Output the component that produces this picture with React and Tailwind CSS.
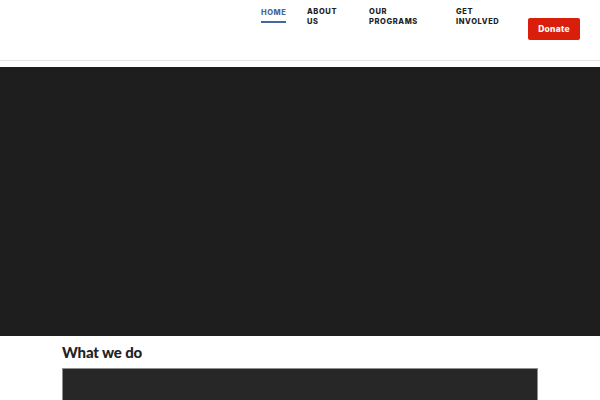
export default function App() {
  const font = { fontFamily: "Inter, 'Liberation Sans', sans-serif" };
  return (
    <div className="w-[600px] h-[400px] bg-white overflow-hidden" style={font}>
      <header className="h-[61px] border-b border-[#e4e4e4] flex items-start">
        <nav className="ml-[261px] flex items-start text-[7.5px] font-extrabold tracking-[0.08em] uppercase text-[#222] leading-[10px]">
          <a className="w-[46px] pt-[8px] text-[#46679a]">
            <span className="inline-block pb-[3px] border-b-2 border-[#46679a]">Home</span>
          </a>
          <a className="w-[62px] pt-[7px]">About<br />Us</a>
          <a className="w-[87px] pt-[7px]">Our<br />Programs</a>
          <a className="w-[72px] pt-[7px]">Get<br />Involved</a>
        </nav>
        <button className="mt-[18px] w-[52px] h-[22px] rounded-[2px] bg-[#d91e0b] text-white text-[8.5px] font-extrabold tracking-[0.03em]">
          Donate
        </button>
      </header>
      <div className="h-[6px]" />
      <section className="h-[269px] bg-[#1e1e1e]" />
      <section className="px-[62px] pt-[7px]">
        <h2 className="text-[15px] font-black text-[#222] leading-[18px] tracking-[-0.01em]" style={{ fontFamily: "Lato, 'Liberation Sans', sans-serif" }}>
          What we do
        </h2>
        <div className="mt-[7px] w-[476px] h-[60px] bg-[#272727] border border-[#8f8f8f]" />
      </section>
    </div>
  );
}
